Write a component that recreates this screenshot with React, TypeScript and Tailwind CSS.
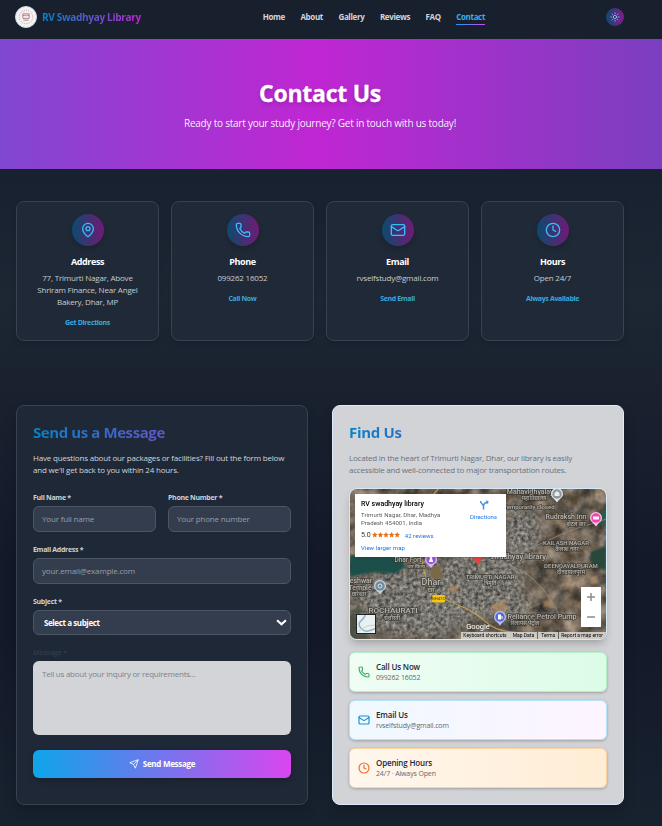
import React from "react";
import { Phone, Mail, Clock, MapPin, Send, Sun } from "lucide-react";

const nav = ["Home", "About", "Gallery", "Reviews", "FAQ"];

const infoCards = [
  { icon: MapPin, title: "Address", lines: ["77, Trimurti Nagar, Above", "Shriram Finance, Near Angel", "Bakery, Dhar, MP"], link: "Get Directions" },
  { icon: Phone, title: "Phone", lines: ["099262 16052"], link: "Call Now" },
  { icon: Mail, title: "Email", lines: ["rvselfstudy@gmail.com"], link: "Send Email" },
  { icon: Clock, title: "Hours", lines: ["Open 24/7"], link: "Always Available" },
];

const contacts = [
  { icon: Phone, title: "Call Us Now", text: "099262 16052", box: "border-[#b4efc8] from-[#f0fdf4] to-[#dcfce7]", tint: "text-[#3fae6a]" },
  { icon: Mail, title: "Email Us", text: "rvselfstudy@gmail.com", box: "border-[#b5e3fb] from-[#f0f9ff] to-[#fdf4ff]", tint: "text-[#1e8fd0]" },
  { icon: Clock, title: "Opening Hours", text: "24/7 · Always Open", box: "border-[#fdd3a2] from-[#fff7ed] to-[#ffedd5]", tint: "text-[#ea6a2c]" },
];

const places = [
  { x: 182, y: 5, t: "Mahavidhyalaya", s: 7 },
  { x: 184, y: 11, t: "महाविद्यालय", s: 5.5 },
  { x: 179, y: 20, t: "Temporarily closed", s: 6 },
  { x: 216, y: 30, t: "Rudraksh Inn", s: 7 },
  { x: 226, y: 37, t: "होटल बार", s: 5.5 },
  { x: 216, y: 56, t: "KAILASH NAGAR", s: 6 },
  { x: 217, y: 62, t: "कैलाश नगर", s: 5.5 },
  { x: 168, y: 70, t: "swadhyay library", s: 7.5 },
  { x: 221, y: 79, t: "DEENDAYALPURAM", s: 6 },
  { x: 221, y: 85, t: "दीनदयालपुरम", s: 5.5 },
  { x: 140, y: 90, t: "TRIMURTI NAGAR", s: 6 },
  { x: 140, y: 96, t: "त्रिमूर्ति", s: 5.5 },
  { x: 58, y: 73, t: "Dhar Fort", s: 6.5 },
  { x: 66, y: 79, t: "धार किला", s: 5 },
  { x: 81, y: 96, t: "Dhar", s: 9 },
  { x: 81, y: 103, t: "धार", s: 5.5 },
  { x: 11, y: 94, t: "eshwar", s: 7 },
  { x: 10, y: 101, t: "Temple", s: 7 },
  { x: 9, y: 107, t: "धारेश्वर", s: 5.5 },
  { x: 43, y: 124, t: "ROCHAURATI", s: 8 },
  { x: 42, y: 131, t: "रोचौरती", s: 5.5 },
  { x: 192, y: 130, t: "Reliance Petrol Pump", s: 7.2 },
  { x: 175, y: 136, t: "रिलायंस पेट्रोल", s: 5.5 },
];

function Pin({ x, y, color, ring, children }: { x: number; y: number; color: string; ring: string; children?: React.ReactNode }) {
  return (
    <g transform={`translate(${x} ${y})`}>
      <path d="M-6 0a6 6 0 1 1 12 0c0 3.400-3.500 4.500-6 8.500C-2.500 4.500-6 3.400-6 0Z" fill={ring} />
      <circle r="4.700" fill={color} />
      {children}
    </g>
  );
}

function Satellite() {
  return (
    <svg viewBox="0 0 256 150" className="absolute inset-0 h-full w-full" preserveAspectRatio="none">
      <defs>
        <filter id="fields" x="0" y="0" width="100%" height="100%" colorInterpolationFilters="sRGB">
          <feTurbulence type="fractalNoise" baseFrequency="0.07" numOctaves={5} seed={8} />
          <feColorMatrix values="0.7 0.1 0 0 0.03  0.6 0.15 0 0 0.010  0.5 0.2 0 0 -0.020  0 0 0 0 1" />
        </filter>
        <filter id="houses" x="0" y="0" width="100%" height="100%" colorInterpolationFilters="sRGB">
          <feTurbulence type="fractalNoise" baseFrequency="0.28" numOctaves={3} seed={4} />
          <feColorMatrix values="0.75 0 0 0 0.09  0.7 0.05 0 0 0.085  0.65 0.05 0 0 0.09  0 0 0 0 1" />
        </filter>
        <filter id="soft"><feGaussianBlur stdDeviation="7" /></filter>
        <filter id="edge"><feGaussianBlur stdDeviation="0.8" /></filter>
        <mask id="town">
          <g filter="url(#soft)" fill="#fff">
            <ellipse cx="70" cy="112" rx="66" ry="38" />
            <ellipse cx="120" cy="88" rx="55" ry="26" />
            <ellipse cx="170" cy="45" rx="22" ry="28" />
            <ellipse cx="150" cy="115" rx="35" ry="18" />
          </g>
        </mask>
      </defs>
      <rect width="256" height="150" filter="url(#fields)" />
      <g mask="url(#town)" opacity=".9"><rect width="256" height="150" filter="url(#houses)" /></g>
      <g filter="url(#edge)">
        <path d="M0 66H52l3 12-10 7-20-2-25 5Z" fill="#1d4f4a" />
        <path d="M241 62l15-5v24l-12-3-5-8Z" fill="#2c473b" />
        <path d="M250 22l6-1v16l-9-2Z" fill="#2b5a43" />
        <path d="M0 122l10-4 8 32H0Z" fill="#3c4a3a" opacity=".7" />
        <path d="M80 78l9-2 5 10-8 6-6-6Z" fill="#7a6748" />
        <path d="M205 12l8-2 3 10-9 2Z" fill="#4d4238" opacity=".7" />
        <path d="M141 115l14-3 3 8-14 5ZM99 97l8-1 1 7-8 1ZM193 112l9-1 1 6-9 1ZM240 88l7-2 1 8-7 1Z" fill="#b08e64" opacity=".75" />
      </g>
      <g fill="none" strokeLinecap="round">
        <path d="M128 72C160 70 190 55 210 46S245 35 256 30M140 71C175 78 190 92 206 120S225 138 230 150" stroke="#9c9992" strokeWidth="1" opacity=".65" />
        <path d="M71 66C74 82 76 100 88 107S120 118 136 133S175 140 196 150M88 0C84 4 83 6 81 10" stroke="#c9a553" strokeWidth="1.200" opacity=".85" />
        <path d="M0 124H256" stroke="#b0aca4" strokeWidth=".5" opacity=".4" />
      </g>
      <g fontFamily="Roboto, 'Noto Sans', sans-serif" fontWeight="500" textAnchor="middle" fill="#c9c9c7" stroke="#38362f" strokeWidth="1.600" paintOrder="stroke" opacity=".8">
        {places.map((p) => <text key={p.t} x={p.x} y={p.y} fontSize={p.s}>{p.t}</text>)}
      </g>
      <rect x="82" y="106" width="13" height="7.500" rx="1.500" fill="#f5c518" />
      <text x="88.500" y="111.400" fontSize="4.200" fontWeight="500" textAnchor="middle" fill="#6b5510" fontFamily="Roboto, sans-serif">NH47C</text>
      <Pin x={207} y={5} color="#8d979c" ring="#dfe3e5"><path d="M-2.500 2V-1L0-3 2.500-1V2Z" fill="#e9edef" /></Pin>
      <Pin x={246} y={29} color="#f53fb4" ring="#fbc3e6"><path d="M-3-1.500h6v3h-6Z" fill="#fff" /></Pin>
      <Pin x={81} y={70.5} color="#9a55e0" ring="#d9baf7"><path d="M-2 2.500V1.500L-1-1-1.500-2.500H1.500L1-1 2 1.500v1Z" fill="#fff" /></Pin>
      <Pin x={30} y={97} color="#6f8a99" ring="#c4d3dc"><circle r="2" fill="none" stroke="#d8e4ea" strokeWidth="1" /></Pin>
      <Pin x={150} y={128} color="#5569d8" ring="#b9c3f5"><path d="M-2-2.500H1V2.500H-2ZM1.500-1H2.500V2H1.500Z" fill="#fff" /></Pin>
      <path d="M122 66h12c-1 4-5 6-6 11-1-5-5-7-6-11Z" fill="#ea4335" />
      <text x="128" y="139.500" fontSize="7.500" textAnchor="middle" fill="#fff" fontFamily="Roboto, sans-serif">Google</text>
    </svg>
  );
}

function MapPanel() {
  return (
    <div className="relative mt-3 h-[152px] overflow-hidden rounded-lg border border-[#d3e9f8] font-['Roboto',sans-serif] shadow-[0_5px_8px_-2px_rgba(0,0,0,0.25)]">
      <Satellite />
      <div className="absolute top-[5px] left-[5px] flex h-[63px] w-[151px] justify-between bg-white pt-[5px] pr-[9px] pl-[6px] shadow-sm">
        <div>
          <div className="text-[7px] leading-[10px] font-medium whitespace-nowrap text-black">RV swadhyay library</div>
          <div className="mt-[2px] text-[6px] leading-[8px] tracking-[0.08px] whitespace-nowrap text-[#5b5b5b]">Trimurti Nagar, Dhar, Madhya<br />Pradesh 454001, India</div>
          <div className="mt-[3px] flex h-[10px] items-center text-[7px] text-[#333]">
            5.0
            <svg viewBox="0 0 50 10" className="ml-px h-[5.6px] w-7" fill="#e7711b">
              {[0, 10, 20, 30, 40].map((x) => <path key={x} transform={`translate(${x} 0)`} d="M5 0l1.500 3.300 3.500.4-2.600 2.400.7 3.600L5 7.900 1.900 9.700l.7-3.600L0 3.700l3.500-.4Z" />)}
            </svg>
            <span className="ml-[5px] text-[6px] tracking-[0.05px] text-[#1a73e8]">42 reviews</span>
          </div>
          <div className="mt-[3px] text-[6px] leading-[10px] tracking-[0.05px] text-[#1a73e8]">View larger map</div>
        </div>
        <div className="flex flex-col items-center pt-[1px]">
          <svg viewBox="0 0 20 20" className="h-[10px] w-[10px]" fill="none" stroke="#4a90e2" strokeWidth="3">
            <path d="M3 2c0 6 6 6 6 11v6M9 13c0-5 3-8 8-8" /><path d="M13 1l6 1-1 7Z" fill="#4a90e2" stroke="none" />
          </svg>
          <div className="mt-[3px] text-[6px] leading-[8px] text-[#1a73e8]">Directions</div>
        </div>
      </div>
      <div className="absolute right-[5px] bottom-[12px] h-10 w-5 bg-white">
        <svg viewBox="0 0 20 40" className="h-10 w-5" stroke="#8c8c8c" strokeWidth="1.500"><path d="M6 10h8M10 6v8M6 30h8" /></svg>
      </div>
      <div className="absolute bottom-[5px] left-[6px] h-5 w-5 border border-[#222] bg-[#eaf0ef]">
        <svg viewBox="0 0 18 18" className="h-full w-full" fill="none"><path d="M8 0C8 4 2 6 2 9s4 8 9 7 5-2 7-2" stroke="#8fb3cf" strokeWidth="1.500" /><path d="M0 17l10-6 8-1" stroke="#c2d7c4" strokeWidth="1" /></svg>
      </div>
      <div className="absolute right-0 bottom-0 flex h-[7px] bg-[#d6d4cf]/90 text-[5px] leading-[7px] whitespace-nowrap text-black">
        <span className="pr-[3px] pl-[2px]">Keyboard shortcuts</span>
        <span className="border-r border-[#666] px-[3px]">Map Data</span>
        <span className="border-r border-[#666] px-[3px]">Terms</span>
        <span className="pr-[3px] pl-[2px]">Report a map error</span>
      </div>
    </div>
  );
}

function Label({ children }: { children: React.ReactNode }) {
  return <span className="mb-[3px] block pt-px text-[7px] leading-[10px] font-bold tracking-[-0.3px] text-[#cdd2d9]">{children}</span>;
}

function Field({ label, placeholder }: { label: string; placeholder: string }) {
  return (
    <label className="block flex-1">
      <Label>{label}</Label>
      <span className="flex h-[26px] items-center rounded-md border border-[#4b5563] bg-[#343d4d] px-2 text-[8px] tracking-[-0.17px] text-[#969eab]">{placeholder}</span>
    </label>
  );
}

export default function App() {
  return (
    <div className="h-[826px] w-[662px] overflow-hidden bg-[linear-gradient(180deg,#18202e_0px,#18212f_170px,#1d2633_300px,#131929_560px,#131929_640px,#18222f_826px)] font-['Open_Sans',sans-serif] text-white">
      <header className="flex h-[39px] w-[640px] items-start pt-[6px] pr-4 pl-[15px]">
        <div className="flex h-[22px] w-[22px] items-center justify-center rounded-full border border-[#c5dfec] bg-[#f6f1ee]">
          <svg viewBox="0 0 20 20" className="h-[18px] w-[18px]" fill="none" stroke="#a47c86" strokeWidth="1">
            <circle cx="10" cy="10" r="7.500" strokeDasharray="1.200 1.300" opacity=".7" />
            <path d="M6.500 6.500h7v5h-7ZM6.500 8.500c2-1 3 0 3.500.5.500-.5 1.500-1.500 3.500-.5M7 13.500h6" />
          </svg>
        </div>
        <span className="mt-1 ml-[5px] bg-linear-to-r/srgb from-[#0284c7] to-[#c026d3] bg-clip-text text-[10px] leading-[15px] font-bold tracking-[-0.3px] text-transparent">RV Swadhyay Library</span>
        <nav className="mt-[5px] mr-[121px] ml-auto flex gap-[15.5px] text-[8px] leading-3 font-bold tracking-[-0.35px] text-[#d1d5db]">
          {nav.map((n) => <span key={n}>{n}</span>)}
          <span className="h-[14px] border-b border-[#d946ef] text-[#38aee6] [border-image:linear-gradient(90deg,#0ea5e9,#d946ef)_1]">Contact</span>
        </nav>
        <div className="mt-[2px] flex h-[18px] w-[18px] items-center justify-center rounded-full bg-linear-to-r/srgb from-[#0c4a6e] to-[#86198f]">
          <Sun size={10} className="text-[#8ccbf5]" />
        </div>
      </header>
      <section className="h-[130px] w-full bg-[linear-gradient(90deg,#8047d0,#c026d3_48%,#7b3fc0)]">
        <div className="w-[640px] pt-9 text-center">
          <h1 className="text-[23px] leading-9 font-bold tracking-[-0.25px] [-webkit-text-stroke:0.3px_white] [text-shadow:0_2px_4px_rgba(0,0,0,0.2)]">Contact Us</h1>
          <p className="mt-1 text-[10px] leading-[16px] tracking-[-0.23px] text-white/95">Ready to start your study journey? Get in touch with us today!</p>
        </div>
      </section>
      <section className="grid w-[640px] grid-cols-4 gap-3 px-4 pt-8">
        {infoCards.map((c) => (
          <div key={c.title} className="flex h-[140px] flex-col items-center rounded-lg border border-[#374151] bg-[#1f2937] pt-3 shadow-[0_3px_6px_rgba(0,0,0,0.12)]">
            <div className="flex h-8 w-8 items-center justify-center rounded-full bg-linear-to-r/srgb from-[#0c4a6e] to-[#701a75] shadow-[0_3px_5px_rgba(0,0,0,0.15)]"><c.icon size={16} className="text-[#38bdf8]" /></div>
            <h3 className="mt-[9px] text-[9px] leading-[14px] font-bold tracking-[-0.4px]">{c.title}</h3>
            <div className="mt-[3px] text-center text-[8px] leading-3 font-medium tracking-[-0.2px] text-[#c8ccd3]">{c.lines.map((l) => <div key={l}>{l}</div>)}</div>
            <div className="mt-[9px] text-[7px] leading-3 font-bold tracking-[-0.35px] text-[#38a9de]">{c.link}</div>
          </div>
        ))}
      </section>
      <section className="grid w-[640px] grid-cols-2 gap-6 px-4 pt-16">
        <div className="h-[400px] rounded-lg border border-[#374151] bg-[#1f2836] p-4 shadow-[0_6px_12px_rgba(0,0,0,0.2)]">
          <h2 className="bg-linear-to-r/srgb from-[#0284c7] to-[#c026d3] bg-clip-text text-[15px] leading-5 font-bold tracking-[-0.41px] text-transparent">Send us a Message</h2>
          <p className="mt-[10px] mb-4 text-[8px] leading-3 font-medium tracking-[-0.19px] whitespace-nowrap text-[#d1d5db]">Have questions about our packages or facilities? Fill out the form below<br />and we'll get back to you within 24 hours.</p>
          <div className="flex flex-col gap-3">
            <div className="flex gap-3"><Field label="Full Name *" placeholder="Your full name" /><Field label="Phone Number *" placeholder="Your phone number" /></div>
            <Field label="Email Address *" placeholder="your.email@example.com" />
            <div>
              <Label>Subject *</Label>
              <div className="flex h-[25px] items-center justify-between rounded-md border border-[#4b5563] bg-[#343d4d] pr-[3px] pl-[10px] text-[8px] font-bold tracking-[-0.4px]">
                Select a subject
                <svg viewBox="0 0 10 6" className="h-[7px] w-[11px]" fill="none" stroke="#fff" strokeWidth="2"><path d="M1 1l4 3.600L9 1" /></svg>
              </div>
            </div>
            <div>
              <span className="mb-[3px] block pt-px text-[7px] leading-[10px] font-semibold tracking-[-0.1px] text-[#323c4b]">Message *</span>
              <div className="h-[74px] rounded-md bg-[#d2d4d8] px-[9px] pt-[7px] text-[8px] leading-3 tracking-[-0.24px] text-[#7c838e]">Tell us about your inquiry or requirements...</div>
            </div>
          </div>
          <div className="mt-[15px] flex h-7 items-center justify-center gap-1 rounded-md bg-linear-to-r/srgb from-[#0ea5e9] to-[#d946ef] text-[8px] font-bold tracking-[-0.28px] shadow-[0_3px_6px_rgba(0,0,0,0.2)]"><Send size={10} />Send Message</div>
        </div>
        <div className="h-[400px] rounded-lg border border-[#dbeafe] bg-[#d1d3d6] p-4 text-[#1f2937] shadow-[0_6px_12px_rgba(0,0,0,0.2)]">
          <h2 className="bg-linear-to-r/srgb from-[#0284c7] to-[#c026d3] bg-clip-text text-[15px] leading-5 font-bold tracking-[-0.3px] text-transparent">Find Us</h2>
          <p className="mt-[10px] text-[8px] leading-3 tracking-[-0.22px] whitespace-nowrap text-[#6b7280]">Located in the heart of Trimurti Nagar, Dhar, our library is easily<br />accessible and well-connected to major transportation routes.</p>
          <MapPanel />
          <div className="mt-3 flex flex-col gap-2">
            {contacts.map((c) => (
              <div key={c.title} className={`flex h-10 items-center rounded-md border bg-linear-to-r/srgb px-2 shadow-[0_1px_3px_rgba(0,0,0,0.25)] ${c.box}`}>
                <c.icon size={12} strokeWidth={2.3} className={c.tint} />
                <div className="ml-[6px]">
                  <div className="text-[8px] leading-3 font-semibold tracking-[-0.17px]">{c.title}</div>
                  <div className="text-[7px] leading-[10px] tracking-[-0.13px] text-[#5f6775]">{c.text}</div>
                </div>
              </div>
            ))}
          </div>
        </div>
      </section>
    </div>
  );
}
